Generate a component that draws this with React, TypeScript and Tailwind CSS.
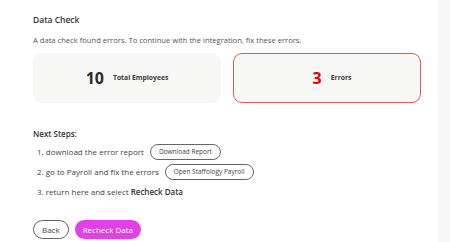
import React from 'react';

const steps = [
  { text: '1. download the error report', action: 'Download Report' },
  { text: '2. go to Payroll and fix the errors', action: 'Open Staffology Payroll' },
];

function StatCard({ value, label, error }: { value: string; label: string; error?: boolean }) {
  return (
    <div
      className={
        'flex h-[50px] w-[188px] items-center justify-center gap-[9px] rounded-[9px] bg-[#f7f7f5] ' +
        (error ? 'border-[1.5px] border-[#e35a5a] pl-[10px]' : '')
      }
    >
      <span className={'text-[16px] font-bold leading-none ' + (error ? 'text-[#e00000]' : 'text-[#2b2b2b]')}>
        {value}
      </span>
      <span className="text-[6.8px] font-bold text-[#3a3a3a]">{label}</span>
    </div>
  );
}

export default function App() {
  return (
    <div className="flex h-[242px] w-[450px] overflow-hidden bg-white font-['Open_Sans',sans-serif] text-[#444]">
      <div className="flex-1 pl-[33px] pr-[17px] pt-[14px]">
        <h1 className="h-[12px] text-[8.5px] font-semibold leading-[12px] text-[#333]">Data Check</h1>
        <p className="mt-[8px] h-[12px] text-[7.6px] leading-[12px] text-[#555]">
          A data check found errors. To continue with the integration, fix these errors.
        </p>

        <div className="mt-[7px] flex gap-[12px]">
          <StatCard value="10" label="Total Employees" />
          <StatCard value="3" label="Errors" error />
        </div>

        <h2 className="mt-[25px] h-[12px] text-[8px] font-semibold leading-[12px] text-[#333]">Next Steps:</h2>

        <div className="mt-[4px] flex flex-col gap-[4px] pl-[4px]">
          {steps.map((s) => (
            <div key={s.action} className="flex h-[16px] items-center gap-[6px]">
              <span className="text-[8px] leading-[12px]">{s.text}</span>
              <button className="flex h-[16px] items-center rounded-full border border-[#666] px-[8px] text-[6.5px] text-[#444]">
                {s.action}
              </button>
            </div>
          ))}
          <div className="mt-[2px] h-[12px] text-[8px] leading-[12px]">
            3. return here and select <span className="font-semibold text-[#333]">Recheck Data</span>
          </div>
        </div>

        <div className="mt-[22px] flex gap-[6px]">
          <button className="flex h-[19px] items-center rounded-full border border-[#666] px-[8px] text-[8px] text-[#444]">
            Back
          </button>
          <button className="flex h-[19px] items-center rounded-full bg-[#e040e4] px-[8px] text-[8px] text-white">
            Recheck Data
          </button>
        </div>
      </div>
      <div className="w-[12px] bg-[#f7f7f7]" />
    </div>
  );
}
